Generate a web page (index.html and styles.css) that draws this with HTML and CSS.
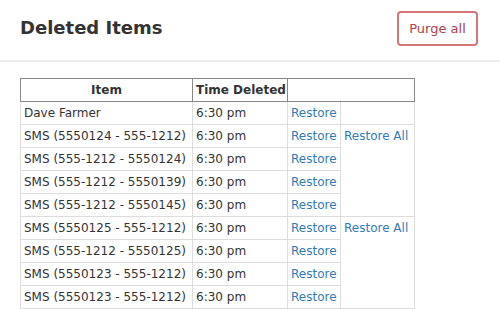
FILE: index.html
```html
<!DOCTYPE html>
<html>
<head>
<meta charset="utf-8">
<link rel="stylesheet" href="styles.css">
</head>
<body>
<div class="page-header">
  <h1 class="title">Deleted Items</h1>
  <button class="btn-purge">Purge all</button>
</div>
<div class="content">
  <table class="items">
    <colgroup>
      <col class="c-item"><col class="c-time"><col class="c-restore"><col class="c-all">
    </colgroup>
    <thead>
      <tr><th>Item</th><th>Time Deleted</th><th colspan="2"></th></tr>
    </thead>
    <tbody>
      <tr><td>Dave Farmer</td><td>6:30 pm</td><td><a href="#">Restore</a></td><td></td></tr>
      <tr><td>SMS (5550124 - 555-1212)</td><td>6:30 pm</td><td><a href="#">Restore</a></td><td rowspan="4" class="all"><a href="#">Restore All</a></td></tr>
      <tr><td>SMS (555-1212 - 5550124)</td><td>6:30 pm</td><td><a href="#">Restore</a></td></tr>
      <tr><td>SMS (555-1212 - 5550139)</td><td>6:30 pm</td><td><a href="#">Restore</a></td></tr>
      <tr><td>SMS (555-1212 - 5550145)</td><td>6:30 pm</td><td><a href="#">Restore</a></td></tr>
      <tr><td>SMS (5550125 - 555-1212)</td><td>6:30 pm</td><td><a href="#">Restore</a></td><td rowspan="4" class="all"><a href="#">Restore All</a></td></tr>
      <tr><td>SMS (555-1212 - 5550125)</td><td>6:30 pm</td><td><a href="#">Restore</a></td></tr>
      <tr><td>SMS (5550123 - 555-1212)</td><td>6:30 pm</td><td><a href="#">Restore</a></td></tr>
      <tr><td>SMS (5550123 - 555-1212)</td><td>6:30 pm</td><td><a href="#">Restore</a></td></tr>
    </tbody>
  </table>
</div>
</body>
</html>
```
FILE: styles.css
```css
html, body {
  margin: 0;
  padding: 0;
  background: #fff;
  color: #333;
  font-family: "DejaVu Sans", Verdana, sans-serif;
  font-size: 12px;
}
.page-header {
  display: flex;
  align-items: center;
  justify-content: space-between;
  height: 60px;
  padding: 0 22px 0 20px;
  border-bottom: 2px solid #ececec;
}
.title {
  margin: 0 0 6px 0;
  font-size: 18px;
  font-weight: bold;
  color: #333;
}
.btn-purge {
  font-family: "DejaVu Sans", Verdana, sans-serif;
  font-size: 13px;
  color: #a8434a;
  background: #fff;
  border: 2px solid #d57779;
  border-radius: 4px;
  width: 81px;
  height: 35px;
  padding: 0;
  margin-top: -3px;
}
.content {
  padding: 16px 0 0 20px;
}
.items {
  border-collapse: collapse;
  table-layout: fixed;
  width: 394px;
}
.c-item { width: 172px; }
.c-time { width: 95px; }
.c-restore { width: 53px; }
.c-all { width: 74px; }
.items th, .items td {
  height: 22px;
  padding: 0 3px;
  line-height: 16px;
  white-space: nowrap;
  overflow: hidden;
  text-align: left;
  vertical-align: middle;
}
.items td {
  border: 1px solid #ddd;
}
.items th {
  border: 1px solid #888;
  font-weight: bold;
  text-align: center;
}
.items td.all {
  vertical-align: top;
  padding-top: 3px;
}
.items a {
  color: #337ab7;
  text-decoration: none;
}
```
